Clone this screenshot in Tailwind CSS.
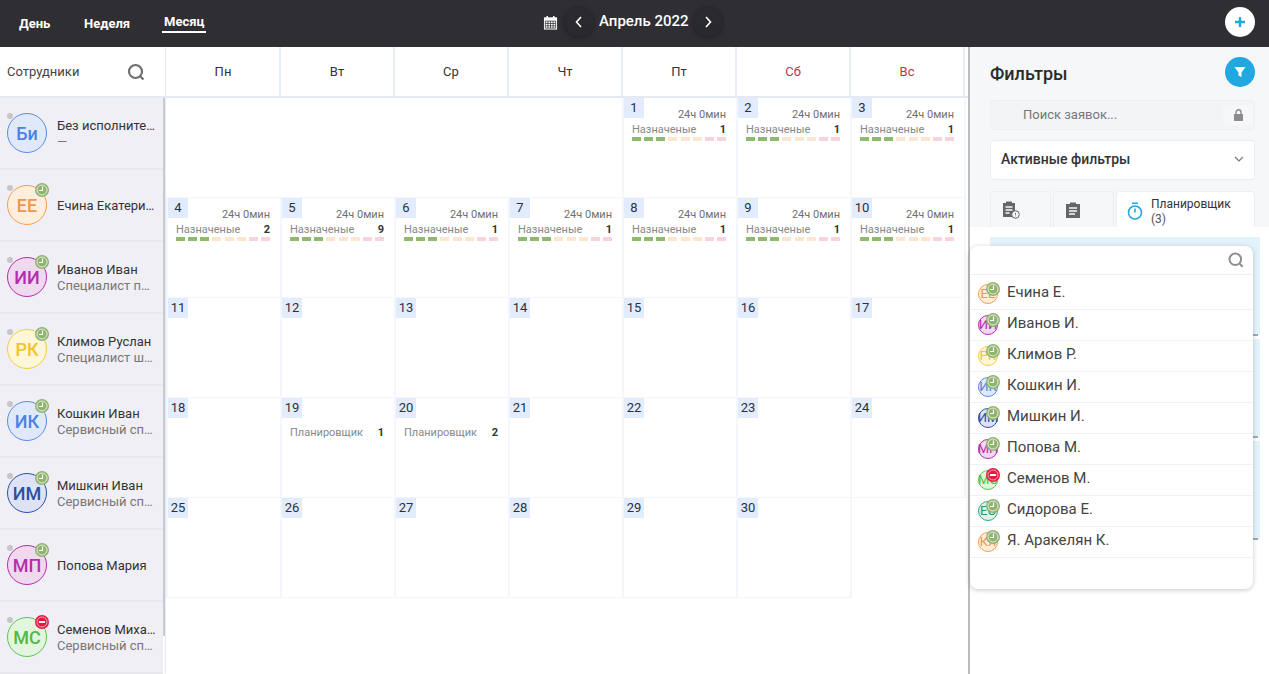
<!DOCTYPE html>
<html lang="en">
<head>
    <meta charset="UTF-8">
    <title>Календарь</title>
    <script src="https://cdn.jsdelivr.net/npm/@tailwindcss/browser@4"></script>
</head>
<body class="h-[674px] w-[1269px] overflow-hidden bg-white font-['Roboto',sans-serif] text-[#333]">
    <!-- Top bar -->
    <div class="relative flex h-[47px] items-center bg-[#2f2e33] text-white">
        <div class="flex items-center pl-[19px] text-[13px] font-bold leading-[16px]">
            <span class="w-[65px]">День</span>
            <span class="w-[78px]">Неделя</span>
            <span class="border-b-2 border-white px-[2px] pb-[1px]">Месяц</span>
        </div>
        <div class="absolute left-[543px] top-[7px] flex items-center">
            <svg class="h-[15px] w-[15px]" viewBox="0 0 16 16" fill="none" stroke="#fff" stroke-width="1.2">
                <rect x="1" y="2.5" width="14" height="13" fill="#fff" stroke="none"/>
                <path d="M2.5 6.5h11v7.5h-11z M2.5 9h11 M2.5 11.500h11 M5.200 6.500v7.500 M8 6.500v7.500 M10.800 6.500v7.500" stroke="#2f2e33" stroke-width="0.8"/>
                <path d="M4.500 1v3 M11.500 1v3" stroke-width="1.600"/>
            </svg>
            <div class="ml-[6px] flex h-[30px] w-[30px] items-center justify-center rounded-full bg-[#2a292d] shadow-[0_1px_4px_rgba(0,0,0,0.35)]">
                <svg class="h-[14px] w-[14px]" viewBox="0 0 14 14" fill="none" stroke="#fff" stroke-width="1.6"><path d="M9 2 4.500 7 9 12"/></svg>
            </div>
            <span class="ml-[5px] w-[95px] pb-[2px] text-[15px] font-medium leading-[28px]">Апрель 2022</span>
            <div class="ml-[-1px] flex h-[30px] w-[30px] items-center justify-center rounded-full bg-[#2a292d] shadow-[0_1px_4px_rgba(0,0,0,0.35)]">
                <svg class="h-[14px] w-[14px]" viewBox="0 0 14 14" fill="none" stroke="#fff" stroke-width="1.6"><path d="M5 2l4.500 5L5 12"/></svg>
            </div>
        </div>
        <div class="absolute left-[1225px] top-[7px] flex h-[30px] w-[30px] items-center justify-center rounded-full bg-white">
            <svg class="h-[12px] w-[12px]" viewBox="0 0 12 12" stroke="#22a7e0" stroke-width="2.400"><path d="M6 1v10M1 6h10"/></svg>
        </div>
    </div>

    <div class="flex h-[627px]">
        <!-- Employees -->
        <div class="w-[166px] shrink-0 overflow-hidden border-r border-[#e3e9f5]">
            <div class="flex h-[51px] items-center justify-between border-b-2 border-[#e5e9f2] pl-[7px] pr-[20px] text-[13px] text-[#444]">
                <span>Сотрудники</span>
                <svg class="h-[18px] w-[18px]" viewBox="0 0 18 18" fill="none" stroke="#6f6f6f" stroke-width="2.200"><circle cx="8.500" cy="8.500" r="6.500"/><path d="m13.500 13.500 3 3"/></svg>
            </div>
            <div id="employees" class="relative"></div>
        </div>

        <!-- Calendar -->
        <div class="w-[802px] shrink-0">
            <div class="flex h-[51px] border-b-2 border-[#e5e9f2] pl-px text-center text-[13px] leading-[49px] text-[#333]">
                <div class="w-[114px] border-r-2 border-[#e8eef9]">Пн</div>
                <div class="w-[114px] border-r-2 border-[#e8eef9]">Вт</div>
                <div class="w-[114px] border-r-2 border-[#e8eef9]">Ср</div>
                <div class="w-[114px] border-r-2 border-[#e8eef9]">Чт</div>
                <div class="w-[114px] border-r-2 border-[#e8eef9]">Пт</div>
                <div class="w-[114px] border-r-2 border-[#e8eef9] text-[#c8323c]">Сб</div>
                <div class="w-[114px] border-r-2 border-[#e8eef9] text-[#c8323c]">Вс</div>
            </div>
            <div id="grid" class="grid grid-cols-[repeat(7,114px)] grid-rows-[repeat(5,100px)]"></div>
        </div>

        <!-- Filters -->
        <div class="relative flex-1 border-l-2 border-[#bcbcbc] bg-[#f6f7f9]">
            <div class="flex h-[40px] items-end justify-between pl-[20px] pr-[14px]">
                <span class="translate-y-[2px] text-[18px] font-medium leading-[30px] text-[#2a2a2a]">Фильтры</span>
                <div class="flex h-[30px] w-[30px] items-center justify-center rounded-full bg-[#22a7e0]">
                    <svg class="h-[12px] w-[12px]" viewBox="0 0 12 12" fill="#fff"><path d="M0.500 1h11L7.500 6.500V11L4.500 9.500V6.500z"/></svg>
                </div>
            </div>
            <div class="ml-[20px] mr-[14px] mt-[13px] flex h-[30px] items-center justify-between rounded border border-[#eeeff2] bg-[#f3f4f6] pl-[32px] text-[13px] text-[#777]">
                <span>Поиск заявок...</span>
                <div class="mr-px flex h-[20px] w-[30px] items-center justify-center bg-[#f7f7f9]">
                    <svg class="h-[12px] w-[11px]" viewBox="0 0 11 12" fill="#8c8c8c"><path d="M1 5h9v7H1z"/><path d="M3 5V3.200a2.500 2.500 0 0 1 5 0V5" fill="none" stroke="#8c8c8c" stroke-width="1.400"/></svg>
                </div>
            </div>
            <div class="ml-[20px] mr-[14px] mt-[10px] flex h-[40px] items-center justify-between rounded border border-[#eceef1] bg-white pb-[2px] pl-[10px] pr-[10px] text-[14px] font-medium text-[#333]">
                <span>Активные фильтры</span>
                <svg class="h-[10px] w-[10px]" viewBox="0 0 10 10" fill="none" stroke="#777" stroke-width="1.200"><path d="M1 3l4 4 4-4"/></svg>
            </div>
            <!-- Tabs -->
            <div class="ml-[20px] mr-[14px] mt-[11px] flex h-[36px] gap-[2px]">
                <div class="flex w-[61px] items-center rounded-t border border-b-0 border-[#eceef1] pl-[10px]">
                    <svg class="h-[20px] w-[20px]" viewBox="0 0 20 20"><path d="M2 3h3V1.500h6V3h3v14H2z" fill="#666"/><path d="M4.500 7h7M4.500 10h7M4.500 13h4" stroke="#f6f7f9" stroke-width="1.300"/><circle cx="14.500" cy="14.500" r="3.800" fill="#f6f7f9" stroke="#666" stroke-width="1"/><path d="M14.500 12.800v2M14.500 15.600v.8" stroke="#666" stroke-width="0.900"/></svg>
                </div>
                <div class="flex w-[61px] items-center rounded-t border border-b-0 border-[#eceef1] pl-[10px]">
                    <svg class="h-[18px] w-[18px]" viewBox="0 0 18 18"><path d="M2 3h4V1.500h6V3h4v14H2z" fill="#666"/><path d="M5 7h8M5 10h8M5 13h6" stroke="#f6f7f9" stroke-width="1.400"/></svg>
                </div>
                <div class="flex flex-1 rounded-t border border-b-0 border-[#eceef1] bg-white pl-[9px] pt-[5px]">
                    <svg class="mt-[5px] h-[18px] w-[18px]" viewBox="0 0 18 18" fill="none" stroke="#22a7e0" stroke-width="1.600"><circle cx="9" cy="10.500" r="6.500"/><path d="M6 1.200h6M9 6.500v4"/></svg>
                    <div class="ml-[7px] text-[12px] leading-[15px] text-[#333]"><div>Планировщик</div><div class="text-[#555]">(3)</div></div>
                </div>
            </div>
            <!-- Tab body with the dropdown over it -->
            <div class="h-[447px] bg-white pl-[20px] pr-[9px] pt-[10px]">
                <div class="flex h-[98px] flex-col justify-end bg-[#e3f3fc]"><div class="mr-[2px] h-[2px] translate-y-[1px] bg-[#a5a9ad]"></div></div>
                <div class="mt-[4px] flex h-[98px] flex-col justify-end bg-[#e3f3fc]"><div class="mr-[2px] h-[2px] translate-y-[1px] bg-[#a5a9ad]"></div></div>
                <div class="mt-[4px] flex h-[98px] flex-col justify-end bg-[#e3f3fc]"><div class="mr-[2px] h-[2px] translate-y-[1px] bg-[#a5a9ad]"></div></div>
            </div>
            <div class="absolute left-0 top-[199px] h-[343px] w-[283px] rounded-lg bg-white shadow-[0_1px_5px_rgba(0,0,0,0.22)]">
                <div class="flex h-[29px] items-center justify-end border-b border-[#eef0f4] pr-[9px]">
                    <svg class="h-[16px] w-[16px]" viewBox="0 0 16 16" fill="none" stroke="#8f8f8f" stroke-width="2"><circle cx="7.300" cy="7.300" r="5.800"/><path d="m11.700 11.700 3 3"/></svg>
                </div>
                <div id="dropdown" class="pt-[4px]"></div>
            </div>
        </div>
    </div>

    <script>
        const clock = `<svg class="h-full w-full" viewBox="0 0 14 14"><circle cx="7" cy="7" r="7" fill="#8fb26f"/><circle cx="7" cy="7" r="5" fill="#8fb26f" stroke="#e6efdc" stroke-width="1"/><path d="M7.500 3.500v4H4" fill="none" stroke="#fff" stroke-width="1.200"/></svg>`
        const busy = `<svg class="h-full w-full" viewBox="0 0 14 14"><circle cx="7" cy="7" r="7" fill="#e3193f"/><circle cx="7" cy="7" r="5" fill="none" stroke="#f8c8d2" stroke-width="0.800"/><path d="M4 7h6" stroke="#fff" stroke-width="2"/></svg>`

        const blue = 'border-[#5b8be0] bg-[#dfe9f9] text-[#4c82e6]'
        const orange = 'border-[#f0a050] bg-[#fdeedd] text-[#f0954a]'
        const pink = 'border-[#b52cb0] bg-[#efd9ef] text-[#b52cb0]'
        const yellow = 'border-[#f2cf3c] bg-[#fdf6d8] text-[#f0c52c]'
        const navy = 'border-[#2c4fa8] bg-[#dde2f4] text-[#2c4fa8]'
        const green = 'border-[#5fc450] bg-[#e2f5df] text-[#4fbc40]'
        const teal = 'border-[#2ba87e] bg-[#def3ec] text-[#1f9a70]'

        const employees = [
            ['Би', 'Без исполнителя', '—', blue, ''],
            ['ЕЕ', 'Ечина Екатерина', '', orange, clock],
            ['ИИ', 'Иванов Иван', 'Специалист по сервису', pink, clock],
            ['РК', 'Климов Руслан', 'Специалист широкого профиля', yellow, clock],
            ['ИК', 'Кошкин Иван', 'Сервисный специалист', blue, clock],
            ['ИМ', 'Мишкин Иван', 'Сервисный специалист', navy, clock],
            ['МП', 'Попова Мария', '', pink, clock],
            ['МС', 'Семенов Михаил', 'Сервисный специалист', green, busy],
        ]
        document.getElementById('employees').innerHTML = employees.map((e) => `
            <div class="relative flex h-[72px] w-[163px] items-center border-b-2 border-[#e8e8ec] bg-[#f0eff5] pl-[7px]">
                <span class="absolute left-[7px] top-[15px] h-[6px] w-[6px] rounded-full bg-[#c6c6c8]"></span>
                <div class="relative flex h-[40px] w-[40px] shrink-0 items-center justify-center rounded-full border text-[18px] font-medium ${e[3]}">
                    ${e[0]}
                    ${e[4] ? `<span class="absolute -right-[3px] -top-[3px] h-[14px] w-[14px]">${e[4]}</span>` : ''}
                </div>
                <div class="ml-[10px] w-[99px] pt-[2px] text-[13px] leading-[16px]">
                    <div class="truncate text-[#333]">${e[1]}</div>
                    ${e[2] ? `<div class="truncate text-[#777]">${e[2]}</div>` : ''}
                </div>
            </div>`).join('') + `<div class="absolute left-[163px] top-0 h-[538px] w-[3px] bg-[#c9cacd]"></div>`

        const days = {
            1: 1, 2: 1, 3: 1, 4: 2, 5: 9, 6: 1, 7: 1, 8: 1, 9: 1, 10: 1,
        }
        const bar = `<div class="flex justify-between">
            <i class="h-[4px] w-[9px] bg-[#8fb96f]"></i><i class="h-[4px] w-[9px] bg-[#8fb96f]"></i><i class="h-[4px] w-[9px] bg-[#8fb96f]"></i>
            <i class="h-[4px] w-[9px] bg-[#fce6cf]"></i><i class="h-[4px] w-[9px] bg-[#fce6cf]"></i><i class="h-[4px] w-[9px] bg-[#fce6cf]"></i>
            <i class="h-[4px] w-[9px] bg-[#f8d3dc]"></i><i class="h-[4px] w-[9px] bg-[#f8d3dc]"></i></div>`
        let cells = ''
        for (let i = 0; i < 4; i++) cells += `<div class="border-b border-[#f3f6fc]"></div>`
        for (let d = 1; d <= 30; d++) {
            let body = ''
            if (days[d]) {
                body = `<div class="mt-[-10px] pr-[10px] text-right text-[11px] leading-[13px] text-[#6f6f6f]">24ч 0мин</div>
                    <div class="pl-[8px] pr-[10px]">
                        <div class="flex justify-between pt-[1px] text-[11px] leading-[15px] text-[#888]"><span>Назначеные</span><b class="font-bold text-[#333]">${days[d]}</b></div>
                        ${bar}
                    </div>`
            } else if (d == 19 || d == 20) {
                body = `<div class="mt-[7px] flex justify-between pl-[8px] pr-[10px] text-[11px] leading-[16px] text-[#888]"><span>Планировщик</span><b class="font-bold text-[#333]">${d == 19 ? 1 : 2}</b></div>`
            }
            const last = (d + 3) % 7 == 6 ? 'shadow-[2px_0_0_#f3f6fc]' : ''
            cells += `<div class="border-b border-l-2 border-[#f3f6fc] ${last}">
                <div class="h-[20px] w-[20px] bg-[#e2ecfd] text-center text-[13px] leading-[20px] text-[#2a3040]">${d}</div>
                ${body}
            </div>`
        }
        cells += `<div class="border-l-2 border-[#f3f6fc]"></div>`
        document.getElementById('grid').innerHTML = cells

        const people = [
            ['ЕЕ', 'Ечина Е.', orange, clock], ['ИИ', 'Иванов И.', pink, clock], ['РК', 'Климов Р.', yellow, clock],
            ['ИК', 'Кошкин И.', blue, clock], ['ИМ', 'Мишкин И.', navy, clock], ['МП', 'Попова М.', pink, clock],
            ['МС', 'Семенов М.', green, busy], ['ЕС', 'Сидорова Е.', teal, clock], ['КЯ', 'Я. Аракелян К.', orange, clock],
        ]
        document.getElementById('dropdown').innerHTML = people.map(p => `
            <div class="flex h-[31px] items-center border-b border-[#f0f1f4] pb-[3px] pl-[8px]">
                <div class="relative flex h-[20px] w-[20px] shrink-0 translate-y-[1px] items-center justify-center rounded-full border text-[13px] ${p[2]}">
                    ${p[0]}
                    <span class="absolute -right-[3px] -top-[3px] h-[14px] w-[14px]">${p[3]}</span>
                </div>
                <span class="ml-[9px] text-[15px] text-[#444]">${p[1]}</span>
            </div>`).join('')
    </script>
</body>
</html>
